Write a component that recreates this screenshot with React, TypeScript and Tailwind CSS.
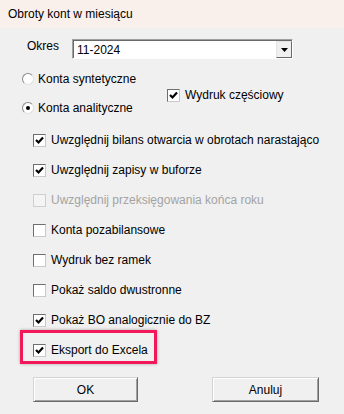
import React from 'react';

const font = { fontFamily: '"Liberation Sans", Arial, sans-serif' };

function Check({ checked, disabled }: { checked?: boolean; disabled?: boolean }) {
  return (
    <span
      className={`w-[13px] h-[13px] shrink-0 flex items-center justify-center border ${
        disabled
          ? 'border-[#cfcfcf] bg-[#f4f4f4]'
          : 'border-t-[#6e6e6e] border-l-[#6e6e6e] border-b-[#c9c9c9] border-r-[#c9c9c9] bg-white'
      }`}
    >
      {checked && (
        <svg width="9" height="9" viewBox="0 0 9 9" aria-hidden="true">
          <path d="M1 4 L3.5 6.5 L8 1.5" fill="none" stroke="#000" strokeWidth="2.2" />
        </svg>
      )}
    </span>
  );
}

function Radio({ checked }: { checked?: boolean }) {
  return (
    <span className="w-[12px] h-[12px] shrink-0 rounded-full border border-t-[#8a8a8a] border-l-[#8a8a8a] border-b-[#e0e0e0] border-r-[#e0e0e0] bg-white flex items-center justify-center">
      {checked && <span className="w-[4px] h-[4px] rounded-full bg-black" />}
    </span>
  );
}

function Row({ label, checked, disabled }: { label: string; checked?: boolean; disabled?: boolean }) {
  return (
    <div className="h-[30px] flex items-center pl-[33px]">
      <Check checked={checked} disabled={disabled} />
      <span className={`ml-[5px] ${disabled ? 'text-[#a3a3a3]' : 'text-black'}`}>{label}</span>
    </div>
  );
}

function Button({ label, className }: { label: string; className: string }) {
  return (
    <button
      className={`h-[25px] bg-[#f0f0f0] border border-t-[#d4d4d4] border-l-[#d4d4d4] border-b-[#696969] border-r-[#696969] shadow-[inset_1px_1px_0_#fff,inset_-1px_-1px_0_#a0a0a0] text-black ${className}`}
    >
      {label}
    </button>
  );
}

export default function App() {
  return (
    <main className="w-[344px] h-[414px] bg-[#f0f0f0] text-[12px] leading-[14px] text-black overflow-hidden" style={font}>
      <div className="h-[28px] bg-[#f9f0eb] flex items-center pl-[8px] pb-[1px]">Obroty kont w miesiącu</div>

      <div className="flex items-start mt-[11px] pl-[27px]">
        <span className="w-[45px]">Okres</span>
        <div className="w-[221px] h-[20px] flex border border-t-[#a0a0a0] border-l-[#a0a0a0] border-b-white border-r-white">
          <div className="flex-1 flex border-t border-l border-[#696969] bg-white">
            <span className="flex-1 pl-[3px] pt-[2px]">11-2024</span>
            <span className="w-[16px] h-full flex items-center justify-center bg-[#f0f0f0] border border-t-[#e3e3e3] border-l-[#e3e3e3] border-b-[#696969] border-r-[#696969]">
              <svg width="7" height="4" viewBox="0 0 7 4" aria-hidden="true">
                <path d="M0 0 H7 L3.5 4 Z" fill="#000" />
              </svg>
            </span>
          </div>
        </div>
      </div>

      <div className="flex mt-[12px] pl-[22px]">
        <div className="w-[145px] flex flex-col gap-[13px]">
          <div className="h-[16px] flex items-center">
            <Radio />
            <span className="ml-[4px]">Konta syntetyczne</span>
          </div>
          <div className="h-[16px] flex items-center">
            <Radio checked />
            <span className="ml-[4px]">Konta analityczne</span>
          </div>
        </div>
        <div className="flex items-center self-center mt-[3px]">
          <Check checked />
          <span className="ml-[5px]">Wydruk częściowy</span>
        </div>
      </div>

      <div className="mt-[9px]">
        <Row label="Uwzględnij bilans otwarcia w obrotach narastająco" checked />
        <Row label="Uwzględnij zapisy w buforze" checked />
        <Row label="Uwzględnij przeksięgowania końca roku" disabled />
        <Row label="Konta pozabilansowe" />
        <Row label="Wydruk bez ramek" />
        <Row label="Pokaż saldo dwustronne" />
        <Row label="Pokaż BO analogicznie do BZ" checked />
        <div className="relative">
          <Row label="Eksport do Excela" checked />
          <div className="absolute left-[20px] top-[-5px] w-[137px] h-[34px] border-[3px] border-[#f2185a] shadow-[0_0_3px_rgba(0,0,0,0.3)] pointer-events-none" />
        </div>
      </div>

      <div className="flex mt-[12px] pl-[33px]">
        <Button label="OK" className="w-[105px]" />
        <Button label="Anuluj" className="w-[107px] ml-[74px]" />
      </div>
    </main>
  );
}
